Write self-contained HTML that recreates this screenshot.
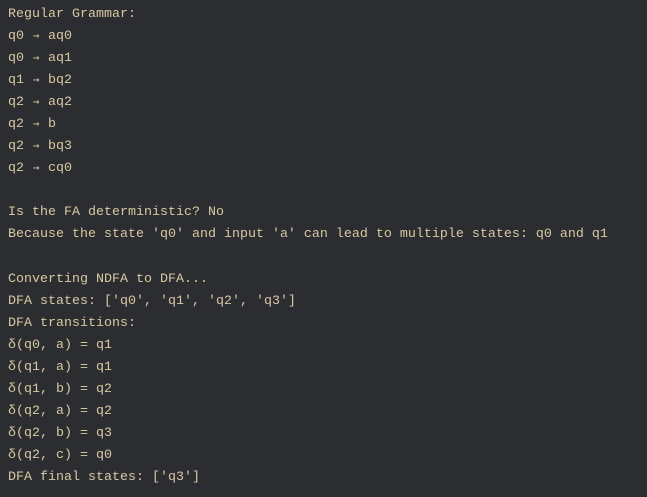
<!DOCTYPE html>
<html><head><style>
html,body{margin:0;padding:0;background:#2b2d30;width:647px;height:497px;overflow:hidden}
pre{margin:0;position:absolute;left:8px;top:4px;font-family:"Liberation Mono",monospace;font-size:13.33px;line-height:22.05px;color:#d8c9a3}
.a{display:inline-block;width:8px;height:10px;line-height:10px;font-family:"DejaVu Sans Mono",monospace;font-size:11px;text-align:center;vertical-align:0}
</style></head><body><pre>Regular Grammar:
q0 <span class="a">→</span> aq0
q0 <span class="a">→</span> aq1
q1 <span class="a">→</span> bq2
q2 <span class="a">→</span> aq2
q2 <span class="a">→</span> b
q2 <span class="a">→</span> bq3
q2 <span class="a">→</span> cq0

Is the FA deterministic? No
Because the state 'q0' and input 'a' can lead to multiple states: q0 and q1

Converting NDFA to DFA...
DFA states: ['q0', 'q1', 'q2', 'q3']
DFA transitions:
δ(q0, a) = q1
δ(q1, a) = q1
δ(q1, b) = q2
δ(q2, a) = q2
δ(q2, b) = q3
δ(q2, c) = q0
DFA final states: ['q3']</pre></body></html>
